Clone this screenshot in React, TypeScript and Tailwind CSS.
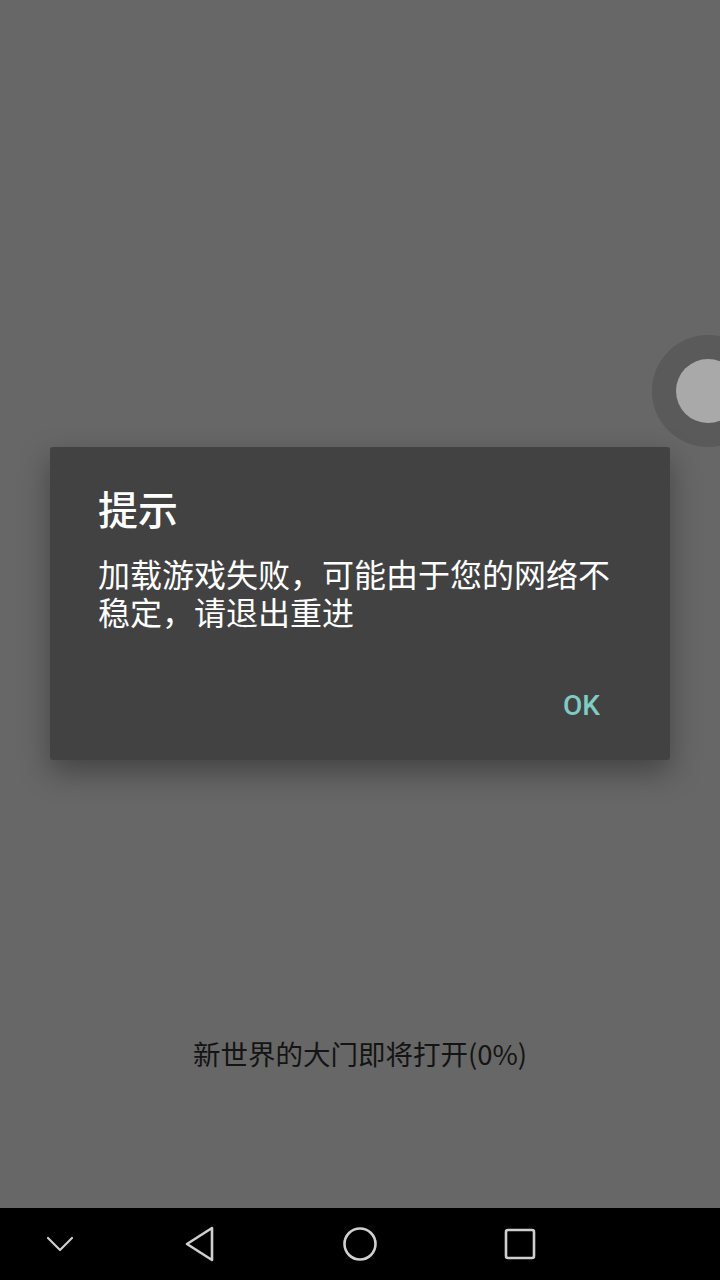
import React from 'react';

const NavBar: React.FC = () => (
  <div className="h-[72px] bg-black flex items-center">
    <div className="w-[120px] flex justify-center">
      <svg width="28" height="18" viewBox="0 0 28 18" fill="none" stroke="#cfcfcf" strokeWidth="2.2" strokeLinecap="round" strokeLinejoin="round">
        <path d="M2 3 L14 15 L26 3" />
      </svg>
    </div>
    <div className="w-[160px] flex justify-center">
      <svg width="32" height="36" viewBox="0 0 32 36" fill="none" stroke="#cfcfcf" strokeWidth="2.6" strokeLinejoin="round">
        <path d="M28 2 L28 34 L3 18 Z" />
      </svg>
    </div>
    <div className="w-[160px] flex justify-center">
      <svg width="36" height="36" viewBox="0 0 36 36" fill="none" stroke="#cfcfcf" strokeWidth="2.6">
        <circle cx="18" cy="18" r="15.5" />
      </svg>
    </div>
    <div className="w-[160px] flex justify-center">
      <svg width="32" height="32" viewBox="0 0 32 32" fill="none" stroke="#cfcfcf" strokeWidth="2.6">
        <rect x="2" y="2" width="28" height="28" rx="2" />
      </svg>
    </div>
  </div>
);

export default function App() {
  return (
    <div
      className="w-[720px] h-[1280px] flex flex-col overflow-hidden bg-[#676767]"
      style={{ fontFamily: '"Noto Sans CJK SC", "Noto Sans", Roboto, sans-serif' }}
    >
      <div className="relative flex-1 flex flex-col justify-end items-center pb-[137px]">
        <p className="text-[27.5px] leading-[36px] text-[#141414]">新世界的大门即将打开(0%)</p>

        {/* floating ball */}
        <div className="absolute left-[652px] top-[335px] w-[112px] h-[112px] rounded-full bg-[#5a5a5a] flex items-center justify-center">
          <div className="w-[64px] h-[64px] rounded-full bg-[#a9a9a9]" />
        </div>

        {/* dialog */}
        <div className="absolute inset-0 flex items-center justify-center">
          <div className="w-[620px] -mt-[2px] bg-[#424242] rounded-[3px] shadow-[0_12px_30px_rgba(0,0,0,0.35)] pt-[37px] pb-[30px] px-[48px] flex flex-col">
            <h2 className="text-[40px] leading-[48px] font-medium text-white">提示</h2>
            <p className="mt-[22px] text-[32px] leading-[38px] text-white">
              加载游戏失败，可能由于您的网络不稳定，请退出重进
            </p>
            <div className="mt-[52px] flex justify-end pr-[22px]">
              <button
                className="h-[48px] text-[28px] font-medium text-[#80cbc4]"
                style={{ fontFamily: 'Roboto, "Noto Sans", sans-serif' }}
              >
                OK
              </button>
            </div>
          </div>
        </div>
      </div>
      <NavBar />
    </div>
  );
}
